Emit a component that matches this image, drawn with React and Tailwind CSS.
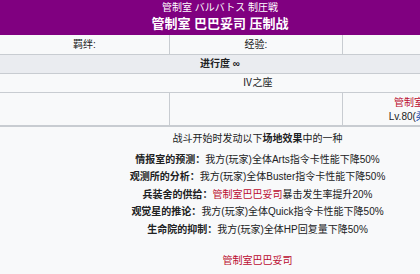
import React from "react";

const effects = [
  ["情报室的预测：", "我方(玩家)全体Arts指令卡性能下降50%"],
  ["观测所的分析：", "我方(玩家)全体Buster指令卡性能下降50%"],
  ["兵装舍的供给：", null],
  ["观觉星的推论：", "我方(玩家)全体Quick指令卡性能下降50%"],
  ["生命院的抑制：", "我方(玩家)全体HP回复量下降50%"],
];

export default function App() {
  return (
    <div
      className="w-[420px] h-[274px] overflow-hidden bg-[#f8f9fa] text-[#202122] text-[10px]"
      style={{ fontFamily: '"Liberation Sans","Noto Sans CJK SC",sans-serif' }}
    >
      <div className="w-[515px]">
        <div className="h-[35px] bg-[#800080] text-white">
          <div className="w-[440px] flex flex-col items-center">
            <div className="h-[15px] pt-[1px] leading-[14px] text-[10px]">管制室 バルバトス 制圧戦</div>
            <div className="leading-[18px] text-[13px] font-bold">管制室 巴巴妥司 压制战</div>
          </div>
        </div>
        <div className="grid grid-cols-[170px_173px_172px] h-[20px] border-b border-[#c8ccd1] leading-[19px] text-center">
          <div className="border-r border-[#c8ccd1]">羁绊:</div>
          <div className="border-r border-[#c8ccd1]">经验:</div>
          <div></div>
        </div>
        <div className="h-[19px] bg-[#eaecf0] border-b border-[#c8ccd1] leading-[18px]">
          <div className="w-[440px] text-center font-bold">进行度 ∞</div>
        </div>
        <div className="h-[19px] border-b border-[#c8ccd1] leading-[18px] text-center">Ⅳ之座</div>
        <div className="grid grid-cols-[170px_173px_172px] h-[34px] border-b-2 border-[#c8ccd1] text-center">
          <div className="border-r border-[#c8ccd1]"></div>
          <div className="border-r border-[#c8ccd1]"></div>
          <div className="flex flex-col items-center pt-[3px] leading-[14px] whitespace-nowrap">
            <span className="text-[#ba0c2f]">管制室巴巴妥司</span>
            <span>
              Lv.80(<span className="text-[#0645ad]">柔和的从者</span>)
            </span>
          </div>
        </div>
        <div className="flex flex-col items-center pt-[3px] leading-[17.5px] whitespace-nowrap">
          <div className="mb-[3px]">
            战斗开始时发动以下<b>场地效果</b>中的一种
          </div>
          {effects.map(([k, v], i) => (
            <div key={i}>
              <b>{k}</b>
              {v ? (
                v
              ) : (
                <>
                  <span className="text-[#ba0c2f]">管制室巴巴妥司</span>暴击发生率提升20%
                </>
              )}
            </div>
          ))}
          <div className="mt-[14px] text-[#ba0c2f]">管制室巴巴妥司</div>
        </div>
      </div>
    </div>
  );
}
